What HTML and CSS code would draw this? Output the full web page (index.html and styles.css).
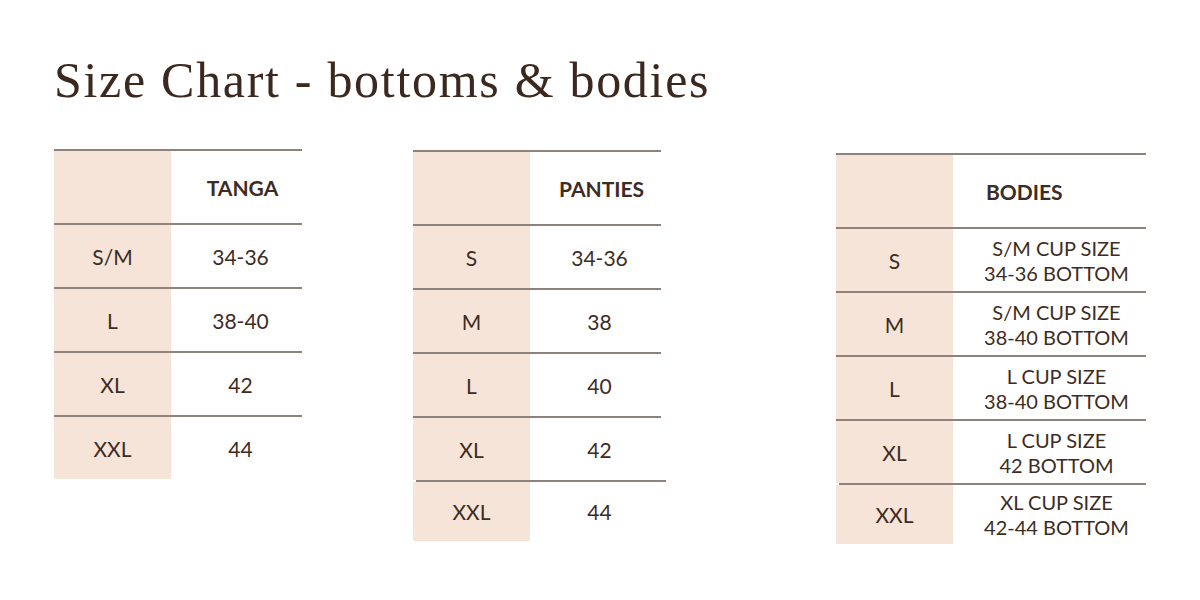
FILE: index.html
```html
<!DOCTYPE html>
<html lang="en">
<head>
<meta charset="utf-8">
<title>Size Chart - bottoms &amp; bodies</title>
<link rel="stylesheet" href="styles.css">
</head>
<body>
<main class="page">
  <h1 class="title">Size Chart - bottoms &amp; bodies</h1>
  <div class="tables">
    <section class="chart chart-tanga">
      <div class="row head"><div class="size"></div><div class="val">TANGA</div></div>
      <div class="row"><div class="size">S/M</div><div class="val">34-36</div></div>
      <div class="row"><div class="size">L</div><div class="val">38-40</div></div>
      <div class="row"><div class="size">XL</div><div class="val">42</div></div>
      <div class="row"><div class="size">XXL</div><div class="val">44</div></div>
    </section>
    <section class="chart chart-panties">
      <div class="row head"><div class="size"></div><div class="val">PANTIES</div></div>
      <div class="row"><div class="size">S</div><div class="val">34-36</div></div>
      <div class="row"><div class="size">M</div><div class="val">38</div></div>
      <div class="row"><div class="size">L</div><div class="val">40</div></div>
      <div class="row"><div class="size">XL</div><div class="val">42</div></div>
      <div class="row last"><div class="size">XXL</div><div class="val">44</div></div>
    </section>
    <section class="chart chart-bodies">
      <div class="row head"><div class="size"></div><div class="val">BODIES</div></div>
      <div class="row"><div class="size">S</div><div class="val">S/M CUP SIZE<br>34-36 BOTTOM</div></div>
      <div class="row"><div class="size">M</div><div class="val">S/M CUP SIZE<br>38-40 BOTTOM</div></div>
      <div class="row"><div class="size">L</div><div class="val">L CUP SIZE<br>38-40 BOTTOM</div></div>
      <div class="row"><div class="size">XL</div><div class="val">L CUP SIZE<br>42 BOTTOM</div></div>
      <div class="row last"><div class="size">XXL</div><div class="val">XL CUP SIZE<br>42-44 BOTTOM</div></div>
    </section>
  </div>
</main>
</body>
</html>
```

FILE: styles.css
```css
* { box-sizing: border-box; }
html, body { margin: 0; padding: 0; background: #ffffff; }
body {
  width: 1200px;
  height: 600px;
  overflow: hidden;
  font-family: Lato, "Open Sans", "Liberation Sans", sans-serif;
  color: #3d2c23;
}
.page { padding: 0; }
.title {
  margin: 0;
  padding: 52px 0 0 54px;
  height: 149px;
  font-family: "Liberation Serif", "Times New Roman", serif;
  font-weight: 400;
  font-size: 50px;
  line-height: 56px;
  letter-spacing: 1.7px;
  color: #3b291f;
}
.tables {
  display: flex;
  align-items: flex-start;
}
.chart {
  display: flex;
  flex-direction: column;
}
.chart-tanga { margin-left: 54px; width: 248px; }
.chart-panties { margin-left: 111px; margin-top: 1px; width: 248px; }
.chart-bodies { margin-left: 175px; margin-top: 4px; width: 310px; }

.row {
  position: relative;
  display: grid;
  grid-template-columns: 117px 1fr;
  height: 64px;
  border-top: 2px solid #8d827c;
}
.row.head { height: 74px; }
.row.last {
  height: 61px;
  border-top-color: transparent;
}
.row.last::before {
  content: "";
  position: absolute;
  top: -2px;
  left: 3px;
  right: -5px;
  height: 2px;
  background: #8d827c;
}
.chart-bodies .row.last::before { right: 0; }
.size {
  background: #f6e4d8;
  display: flex;
  align-items: center;
  justify-content: center;
  font-size: 21px;
}
.val {
  display: flex;
  align-items: center;
  justify-content: center;
  text-align: center;
  font-size: 21px;
  padding-left: 8px;
}
.head .val {
  font-weight: 700;
  font-size: 21px;
  padding-left: 12px;
}
.chart-bodies .val {
  font-size: 20px;
  padding-left: 14px;
  line-height: 25px;
  padding-top: 1px;
}
.chart-bodies .head .val {
  font-size: 21px;
  justify-content: flex-start;
  padding-left: 33px;
}
```
